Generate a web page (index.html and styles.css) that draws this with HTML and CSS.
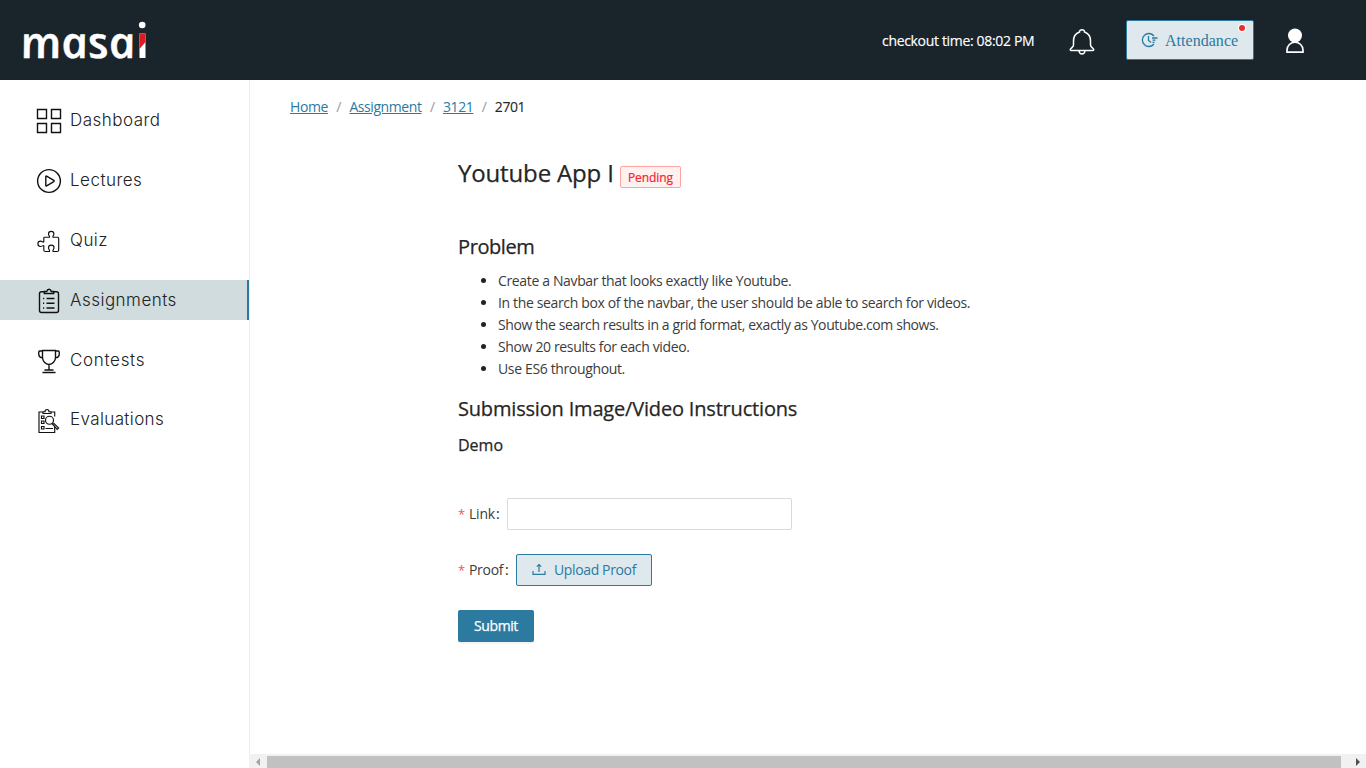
FILE: index.html
```html
<!DOCTYPE html>
<html lang="en">
<head>
<meta charset="utf-8">
<title>Youtube App I</title>
<link rel="stylesheet" href="styles.css">
</head>
<body>
<header class="topbar">
  <svg class="logo" width="130" height="44" viewBox="0 0 130 44">
    <g transform="translate(0 39) skewX(12)">
      <text class="logo-text" x="-1" y="0" textLength="115" lengthAdjust="spacingAndGlyphs">masa</text>
      <text class="logo-text logo-i" x="115.500" y="0">i</text>
    </g>
    <rect x="115.500" y="14.500" width="6" height="24.500" fill="#fff"/>
    <path d="M115.500 14.500H121.500V23L115.500 30Z" fill="#de1b22"/>
    <circle cx="118.200" cy="6" r="3.300" fill="#fff"/>
  </svg>
  <div class="tools">
    <span class="checkout">checkout time: 08:02 PM</span>
    <svg class="bell" width="26" height="28" viewBox="0 0 26 28" fill="none" stroke="#fff" stroke-width="1.5">
      <path d="M10.500 4C10 1 16 1 15.500 4C20 5.500 21.500 9 21.500 13V17C21.500 19.500 25 20 24.800 21.800Q24.600 22.500 23.500 22.500H2.500Q1.400 22.500 1.200 21.800C1 20 4.500 19.500 4.500 17V13C4.500 9 6 5.500 10.500 4Z"/>
      <path d="M10 23Q10.500 26 13 26T16 23"/>
    </svg>
    <button class="attendance">
      <svg width="17" height="16" viewBox="0 0 17 16" fill="none" stroke="#2c7a9f" stroke-width="1.300">
        <path d="M13 4A6.500 6.500 0 1 0 13 12M7.500 4V8.500L10 10.500M11 6H16.500M11.500 8.200H14.500M11.500 10.300H13.500"/>
      </svg>
      <span class="attendance-label">Attendance</span>
      <i class="dot"></i>
    </button>
    <svg class="user" width="20" height="26" viewBox="0 0 20 26">
      <circle cx="10" cy="7.500" r="7" fill="#fff"/>
      <path d="M2 24.200V22A8 7.800 0 0 1 18 22V24.200Z" fill="#1a252b" stroke="#fff" stroke-width="1.700"/>
    </svg>
  </div>
</header>
<div class="shell">
  <nav class="sidebar">
    <a class="item"><svg class="ico" viewBox="0 0 26 26"><path d="M1.500 1.500h9v9h-9zM15.500 1.500h9v9h-9zM1.500 15.500h9v9h-9zM15.500 15.500h9v9h-9z"/></svg><span>Dashboard</span></a>
    <a class="item"><svg class="ico" viewBox="0 0 26 26"><circle cx="13" cy="13" r="11.400"/><path d="M9.800 8.600Q9.800 7.800 10.600 8.200L17.800 12.400Q18.500 13 17.800 13.600L10.600 17.800Q9.800 18.200 9.800 17.400Z"/></svg><span>Lectures</span></a>
    <a class="item"><svg class="ico thin" viewBox="0 0 26 26"><path d="M8.700 9.200H13.500C14.200 8.500 12.500 7.500 12.500 6A2.700 2.700 0 0 1 17.900 6C17.900 7.500 16.200 8.500 16.900 9.200H21.500Q22.700 9.200 22.700 10.400V22Q22.700 23.500 21.200 23.500H17C16.200 22.500 18 21.500 18 19.800A2.700 2.700 0 0 0 12.500 19.800C12.500 21.500 14.200 22.500 13.500 23.500H9.300Q7.800 23.500 7.800 22V17.800C7 16.900 6.300 18.500 4.600 18.500A2.700 2.700 0 0 1 4.600 13.100C6.300 13.100 7 14.700 7.800 13.900V10.100Q7.800 9.200 8.700 9.200Z"/></svg><span>Quiz</span></a>
    <a class="item active"><svg class="ico" viewBox="0 0 26 26"><path d="M8.300 3.700H5.500Q3.500 3.700 3.500 5.700V22.500Q3.500 24.500 5.500 24.500H20.500Q22.500 24.500 22.500 22.500V5.700Q22.500 3.700 20.500 3.700H17.700M8.300 3.500V5.500H17.700V3.500H15.300Q14.700 1.300 13 1.300T10.700 3.500ZM10.500 10.500H18.500M10.500 15.200H18.500M10.500 20H18.500M7 10.500H8.200M7 15.200H8.200M7 20H8.200"/></svg><span>Assignments</span></a>
    <a class="item wide"><svg class="ico" viewBox="0 0 26 26"><path d="M6.500 2.500H19.500V9.500C19.500 13 16.500 16.500 13 16.500S6.500 13 6.500 9.500ZM6.500 3H3.700Q2.700 3 2.700 5.500C2.700 8 4 9.800 6.700 9.800M19.500 3H22.300Q23.300 3 23.300 5.500C23.300 8 22 9.800 19.300 9.800M13 16.500V22M8.500 22H17.500M6.500 24.500H19.500"/></svg><span>Contests</span></a>
    <a class="item last"><svg class="ico thin" viewBox="0 0 26 26"><path d="M7 4H3V24.500H18.700V19M18.700 8.500V4H15M7 5.500H15V3.700H13Q13 1.500 11 1.500T9 3.700H7ZM5.500 8H8V10.500H5.500ZM5.500 13H8V15.500H5.500ZM5.500 18.500H8V21H5.500ZM9.500 20.500H17"/><circle cx="13.500" cy="12.200" r="4"/><path d="M16 15.500L21.200 21.500L22.700 20L17.300 14.800"/></svg><span>Evaluations</span></a>
  </nav>
  <div class="main">
    <div class="crumbs"><a>Home</a><i>/</i><a>Assignment</a><i>/</i><a>3121</a><i>/</i><span>2701</span></div>
    <main class="content">
      <div class="title-row"><h1>Youtube App I</h1><span class="tag">Pending</span></div>
      <h2 class="problem">Problem</h2>
      <ul>
        <li>Create a Navbar that looks exactly like Youtube.</li>
        <li>In the search box of the navbar, the user should be able to search for videos.</li>
        <li class="tight">Show the search results in a grid format, exactly as Youtube.com shows.</li>
        <li>Show 20 results for each video.</li>
        <li>Use ES6 throughout.</li>
      </ul>
      <h2 class="instructions">Submission Image/Video Instructions</h2>
      <h3>Demo</h3>
      <div class="field"><span class="star">*</span><label class="l-link" for="link">Link</label><b class="colon">:</b><input id="link" type="text"></div>
      <div class="field"><span class="star">*</span><label class="l-proof">Proof</label><b class="colon">:</b><button class="upload"><svg width="14" height="14" viewBox="0 0 14 14" fill="none" stroke="#2c7a9f" stroke-width="1.200"><path d="M7 9V1.500M4.800 3.700L7 1.500L9.200 3.700M1 8V11.400H13V8"/></svg><span>Upload Proof</span></button></div>
      <button class="submit"><span>Submit</span></button>
    </main>
    <div class="scroll">
      <svg width="18" height="14" viewBox="0 0 18 14"><path d="M11 4V12L7 8Z" fill="#a3a3a3"/></svg>
      <div class="thumb"></div>
      <svg width="25" height="14" viewBox="0 0 25 14"><path d="M15 4V12L19 8Z" fill="#505050"/></svg>
    </div>
  </div>
</div>
</body>
</html>
```
FILE: styles.css
```css
* { box-sizing: border-box; }
body { margin: 0; width: 1366px; height: 768px; overflow: hidden; background: #fff; color: #262626; font: 14px/22px "Open Sans", "Noto Sans", sans-serif; }
span, a, label { white-space: nowrap; }
.topbar { height: 80px; background: #1a252b; display: flex; justify-content: space-between; align-items: center; padding: 0 61px 0 24px; }
.logo { overflow: visible; margin-top: 2px; }
.logo-text { font: italic 600 43.500px "Open Sans", sans-serif; fill: #fff; stroke: #fff; stroke-width: .4px; }
.logo-i { font-weight: 400; font-size: 28px; stroke: none; }
.tools { display: flex; align-items: center; }
.checkout { color: #fff; width: 153px; margin-top: 2px; letter-spacing: -.33px; -webkit-text-stroke: .15px; }
.bell { margin: 3px 31px 0 34px; }
.attendance { position: relative; width: 128px; height: 40px; display: flex; align-items: center; gap: 7px; padding: 0 0 0 14px; background: #dfe8ed; border: 1px solid #2c7a9f; border-radius: 2px; color: #2c7a9f; }
.attendance-label { font: 16px/22px "Liberation Serif", serif; letter-spacing: .03px; margin-top: 2px; }
.dot { position: absolute; right: 8px; top: 4px; width: 6px; height: 6px; border-radius: 50%; background: #e3302f; box-shadow: 0 0 0 1px #fff; }
.user { margin: 2px 0 0 31px; }
.shell { display: flex; height: 688px; }
.sidebar { width: 250px; border-right: 1px solid #ebebf3; padding-top: 20px; display: flex; flex-direction: column; gap: 20px; }
.item { height: 40px; display: flex; align-items: center; padding-left: 36px; gap: 8px; font: 300 17px/24px Inter, sans-serif; letter-spacing: .48px; color: #222; }
.item.active { background: #d0dcde; border-right: 2px solid #2c7a9f; }
.item.wide { letter-spacing: .68px; }
.item.last { letter-spacing: .38px; }
.item.last span { margin-top: -2px; }
.ico { width: 26px; height: 26px; margin-top: 2px; fill: none; stroke: #111; stroke-width: 1.4; }
.ico.thin { stroke-width: 1.15; }
.main { flex: 1; display: flex; flex-direction: column; }
.crumbs { display: flex; height: 22px; margin: 16px 0 0 40px; letter-spacing: -.42px; }
.crumbs i { font-style: normal; color: #999; width: 21.5px; text-align: center; }
.crumbs a { color: #2c7a9f; text-decoration: underline; }
.crumbs span { -webkit-text-stroke: .1px; }
.content { width: 700px; margin: 39px 0 0 208px; flex: 1; }
.title-row { display: flex; align-items: flex-start; gap: 7px; height: 32px; }
h1, h2, h3 { margin: 0; font-weight: 500; white-space: nowrap; -webkit-text-stroke: .25px; }
h1 { font-size: 24px; line-height: 32px; width: 155px; letter-spacing: -.15px; }
h2 { font-size: 20px; line-height: 28px; letter-spacing: -.18px; }
h3 { font-size: 16px; line-height: 24px; }
.tag { height: 22px; width: 61px; margin-top: 9px; border: 1px solid #ffa39e; background: #fff1f0; color: #f5222d; font-size: 12px; line-height: 21px; padding-left: 7px; border-radius: 2px; -webkit-text-stroke: .2px; letter-spacing: -.1px; }
.problem { margin-top: 44px; letter-spacing: -.4px; }
ul { margin: 9px 0 0; padding-left: 40px; }
li { line-height: 22px; font-weight: 400; color: #3c3c3c; letter-spacing: -.355px; }
li.tight { letter-spacing: -.4px; }
li::marker { color: #222; }
.instructions { margin-top: 15px; }
h3 { margin-top: 10px; }
.field { display: flex; align-items: center; height: 32px; margin-bottom: 24px; }
h3 + .field { margin-top: 41px; }
.star { width: 11px; color: #ff4d4f; font-size: 13px; }
.colon { font-weight: 400; width: 11px; padding-left: 0; }
.l-link { width: 27px; letter-spacing: -.2px; color: #3c3c3c; }
.l-proof { width: 36px; letter-spacing: -.3px; color: #3c3c3c; }
input { width: 285px; height: 32px; border: 1px solid #d9d9d9; border-radius: 2px; background: #fff; }
.upload { width: 136px; height: 32px; display: flex; align-items: center; gap: 8px; padding: 0 0 0 15px; background: #dfe8ed; border: 1px solid #2c7a9f; border-radius: 2px; color: #2c7a9f; font: inherit; letter-spacing: -.37px; }
.submit { width: 76px; height: 32px; border: 0; border-radius: 2px; background: #2c7a9f; color: #fff; font: 500 14px/22px "Open Sans", sans-serif; letter-spacing: -.4px; -webkit-text-stroke: .25px; padding: 0 0 0 16px; text-align: left; box-shadow: 0 2px 0 rgba(0,0,0,.045); }
.scroll { height: 14px; margin-left: -1px; background: #f1f1f1; display: flex; }
.thumb { flex: 1; background: #c1c1c1; margin-top: 2px; }
```
